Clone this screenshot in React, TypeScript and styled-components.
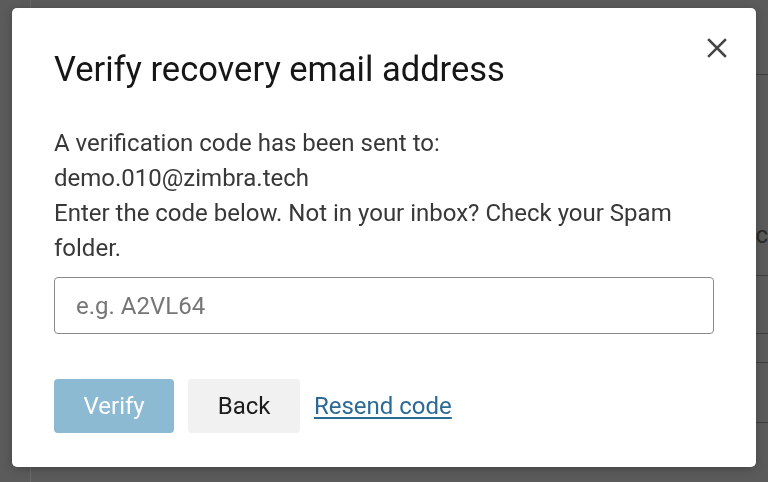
import React from 'react';
import styled, { createGlobalStyle } from 'styled-components';

const GlobalStyle = createGlobalStyle`
  html, body {
    margin: 0;
    padding: 0;
    height: 100%;
  }
  body {
    font-family: Roboto, "Liberation Sans", Arial, sans-serif;
    background: #5b5b5b;
    overflow: hidden;
  }
`;

const Page = styled.div`
  display: grid;
  grid-template-columns: 31px 1fr;
  height: 100vh;
  background: #5b5b5b;
`;

const Sidebar = styled.div`
  border-right: 1px solid #6a6a6a;
`;

const Table = styled.div`
  display: flex;
  flex-direction: column;
  padding-top: 74px;
`;

const TableRow = styled.div<{ $h: number; $noBorder?: boolean }>`
  height: ${(p) => p.$h}px;
  border-top: ${(p) => (p.$noBorder ? 'none' : '1px solid #3f3f3f')};
  box-sizing: border-box;
  display: flex;
  justify-content: flex-end;
  align-items: center;
  color: #2a2a2a;
  font-size: 24px;
`;

const Overlay = styled.div`
  position: fixed;
  inset: 0;
  display: flex;
  justify-content: center;
  align-items: flex-start;
  padding-top: 8px;
`;

const Modal = styled.div`
  position: relative;
  width: 744px;
  box-sizing: border-box;
  background: #ffffff;
  border-radius: 5px;
  padding: 41px 42px 34px;
  box-shadow: 0 2px 10px rgba(0, 0, 0, 0.25);
`;

const CloseButton = styled.button`
  position: absolute;
  top: 28px;
  right: 27px;
  width: 24px;
  height: 24px;
  padding: 0;
  border: none;
  background: none;
  cursor: pointer;
  display: flex;
  align-items: center;
  justify-content: center;
`;

const Title = styled.h2`
  margin: 0 0 37px;
  font-size: 34.5px;
  font-weight: 400;
  line-height: 40px;
  color: #161616;
`;

const Message = styled.p`
  margin: 0 0 11px;
  font-size: 24px;
  line-height: 35px;
  color: #383838;
`;

const CodeInput = styled.input`
  display: block;
  width: 100%;
  height: 57px;
  box-sizing: border-box;
  border: 1px solid #8a8a8a;
  border-radius: 4px;
  padding: 0 21px;
  font-family: inherit;
  font-size: 24px;
  color: #222;
  outline: none;

  &::placeholder {
    color: #767676;
  }
`;

const Actions = styled.div`
  display: flex;
  align-items: center;
  gap: 14px;
  margin-top: 45px;
`;

const Button = styled.button<{ $variant: 'primary' | 'secondary' }>`
  height: 54px;
  padding: 0 29.5px;
  border: none;
  border-radius: 4px;
  font-family: inherit;
  font-size: 24px;
  cursor: pointer;
  background: ${(p) => (p.$variant === 'primary' ? '#8dbad3' : '#f1f1f1')};
  color: ${(p) => (p.$variant === 'primary' ? '#ffffff' : '#1c1c1c')};
`;

const ResendLink = styled.a`
  font-size: 24px;
  color: #2c6a96;
  text-decoration: underline;
  text-underline-offset: 3px;
  cursor: pointer;
`;

const App = () => {
  return (
    <>
      <GlobalStyle />
      <Page>
        <Sidebar />
        <Table>
          <TableRow $h={120} />
          <TableRow $h={81} $noBorder>c</TableRow>
          <TableRow $h={58} />
          <TableRow $h={29} />
          <TableRow $h={60} />
          <TableRow $h={60} />
        </Table>
      </Page>
      <Overlay>
        <Modal>
          <CloseButton aria-label="Close">
            <svg width="22" height="22" viewBox="0 0 22 22">
              <path d="M3 3 L19 19 M19 3 L3 19" stroke="#454545" strokeWidth="2.5" strokeLinecap="square" />
            </svg>
          </CloseButton>
          <Title>Verify recovery email address</Title>
          <Message>
            A verification code has been sent to:
            <br />
            demo.010@zimbra.tech
            <br />
            Enter the code below. Not in your inbox? Check your Spam folder.
          </Message>
          <CodeInput placeholder="e.g. A2VL64" />
          <Actions>
            <Button $variant="primary">Verify</Button>
            <Button $variant="secondary">Back</Button>
            <ResendLink>Resend code</ResendLink>
          </Actions>
        </Modal>
      </Overlay>
    </>
  );
};

export default App;
